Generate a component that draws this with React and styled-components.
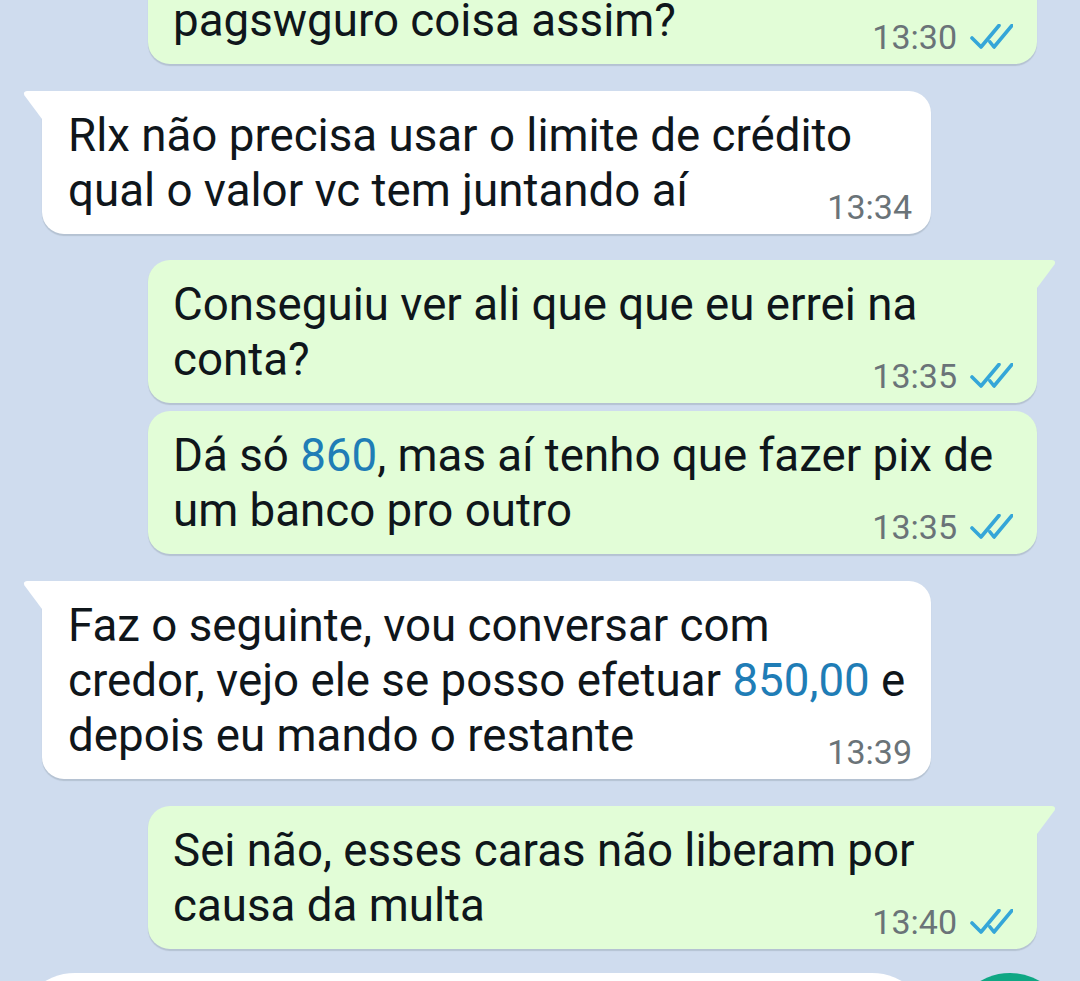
import styled, { createGlobalStyle } from "styled-components";

const GlobalStyle = createGlobalStyle`
  body {
    margin: 0;
    font-family: Roboto, "Noto Sans", sans-serif;
  }
`;

const Page = styled.div`
  width: 1080px;
  height: 981px;
  overflow: hidden;
  background-color: #cfdcee;
  display: flex;
  flex-direction: column;
`;

const Messages = styled.div`
  height: 973px;
  flex-shrink: 0;
  box-sizing: border-box;
  display: flex;
  flex-direction: column;
  justify-content: flex-end;
  overflow: hidden;
  padding: 0 43px 24px 42px;
`;

const Row = styled.div`
  display: flex;
  flex-shrink: 0;
  justify-content: ${(p) => (p.$out ? "flex-end" : "flex-start")};
  margin-top: ${(p) => p.$gap}px;
`;

const Bubble = styled.div`
  position: relative;
  width: 889px;
  box-sizing: border-box;
  display: flex;
  flex-direction: column;
  background-color: ${(p) => (p.$out ? "#e2fdd7" : "#ffffff")};
  border-radius: 22px;
  padding: ${(p) => (p.$out ? "17px 24px 10px 25px" : "17px 19px 10px 26px")};
  box-shadow: 0 1.5px 1px rgba(11, 20, 26, 0.13);

  ${(p) =>
    p.$tail &&
    (p.$out
      ? `border-top-right-radius: 0;`
      : `border-top-left-radius: 0;`)}

  &::before {
    content: "";
    display: ${(p) => (p.$tail ? "block" : "none")};
    position: absolute;
    top: 0;
    width: 19px;
    height: 28px;
    background-color: inherit;
    ${(p) =>
      p.$out
        ? `right: -19px; clip-path: path("M15 0 L0 0 L0 28 L17.5 4.5 Q19.5 0.5 15 0 Z");`
        : `left: -19px; clip-path: path("M4 0 L19 0 L19 28 L1.5 4.5 Q-0.5 0.5 4 0 Z");`}
  }
`;

const Text = styled.div`
  font-family: Roboto, sans-serif;
  font-size: 45.7px;
  line-height: 55px;
  color: #0f161b;
`;

const Line = styled.span`
  display: block;
  white-space: nowrap;
`;

const Number = styled.span`
  color: #1f7db6;
`;

const Meta = styled.div`
  align-self: flex-end;
  margin-top: -28px;
  display: flex;
  align-items: center;
  gap: 12px;
  font-family: Roboto, sans-serif;
  font-size: 34px;
  line-height: 34px;
  color: #6a7378;
`;

const Footer = styled.div`
  flex-shrink: 0;
  display: flex;
  gap: 20px;
  padding: 0 11px 0 16px;
`;

const InputPill = styled.div`
  flex: 1;
  height: 118px;
  border-radius: 59px;
  background-color: #ffffff;
`;

const MicButton = styled.div`
  width: 118px;
  height: 118px;
  flex-shrink: 0;
  border-radius: 50%;
  background-color: #0fa784;
`;

const Ticks = () => (
  <svg width="44" height="27" viewBox="0 0 44 27" fill="none">
    <path
      d="M3 14 L12 23 L30 1.5 M21 18 L25 23 L43 1.5"
      stroke="#35a6d8"
      strokeWidth="3.6"
      strokeLinecap="round"
      strokeLinejoin="round"
    />
  </svg>
);

const messages = [
  { out: true, gap: 0, time: "13:30", lines: ["pagswguro coisa assim?"] },
  {
    out: false,
    tail: true,
    gap: 27,
    time: "13:34",
    lines: ["Rlx não precisa usar o limite de crédito", "qual o valor vc tem juntando aí"],
  },
  {
    out: true,
    tail: true,
    gap: 26,
    time: "13:35",
    lines: ["Conseguiu ver ali que que eu errei na", "conta?"],
  },
  {
    out: true,
    gap: 8,
    time: "13:35",
    lines: [
      <>
        Dá só <Number>860</Number>, mas aí tenho que fazer pix de
      </>,
      "um banco pro outro",
    ],
  },
  {
    out: false,
    tail: true,
    gap: 27,
    time: "13:39",
    lines: [
      "Faz o seguinte, vou conversar com",
      <>
        credor, vejo ele se posso efetuar <Number>850,00</Number> e
      </>,
      "depois eu mando o restante",
    ],
  },
  {
    out: true,
    tail: true,
    gap: 27,
    time: "13:40",
    lines: ["Sei não, esses caras não liberam por", "causa da multa"],
  },
];

const App = () => {
  return (
    <>
      <GlobalStyle />
      <Page>
        <Messages>
          {messages.map((m, i) => (
            <Row key={i} $out={m.out} $gap={m.gap}>
              <Bubble $out={m.out} $tail={m.tail}>
                <Text>
                  {m.lines.map((line, j) => (
                    <Line key={j}>{line}</Line>
                  ))}
                </Text>
                <Meta>
                  {m.time}
                  {m.out && <Ticks />}
                </Meta>
              </Bubble>
            </Row>
          ))}
        </Messages>
        <Footer>
          <InputPill />
          <MicButton />
        </Footer>
      </Page>
    </>
  );
};

export default App;
